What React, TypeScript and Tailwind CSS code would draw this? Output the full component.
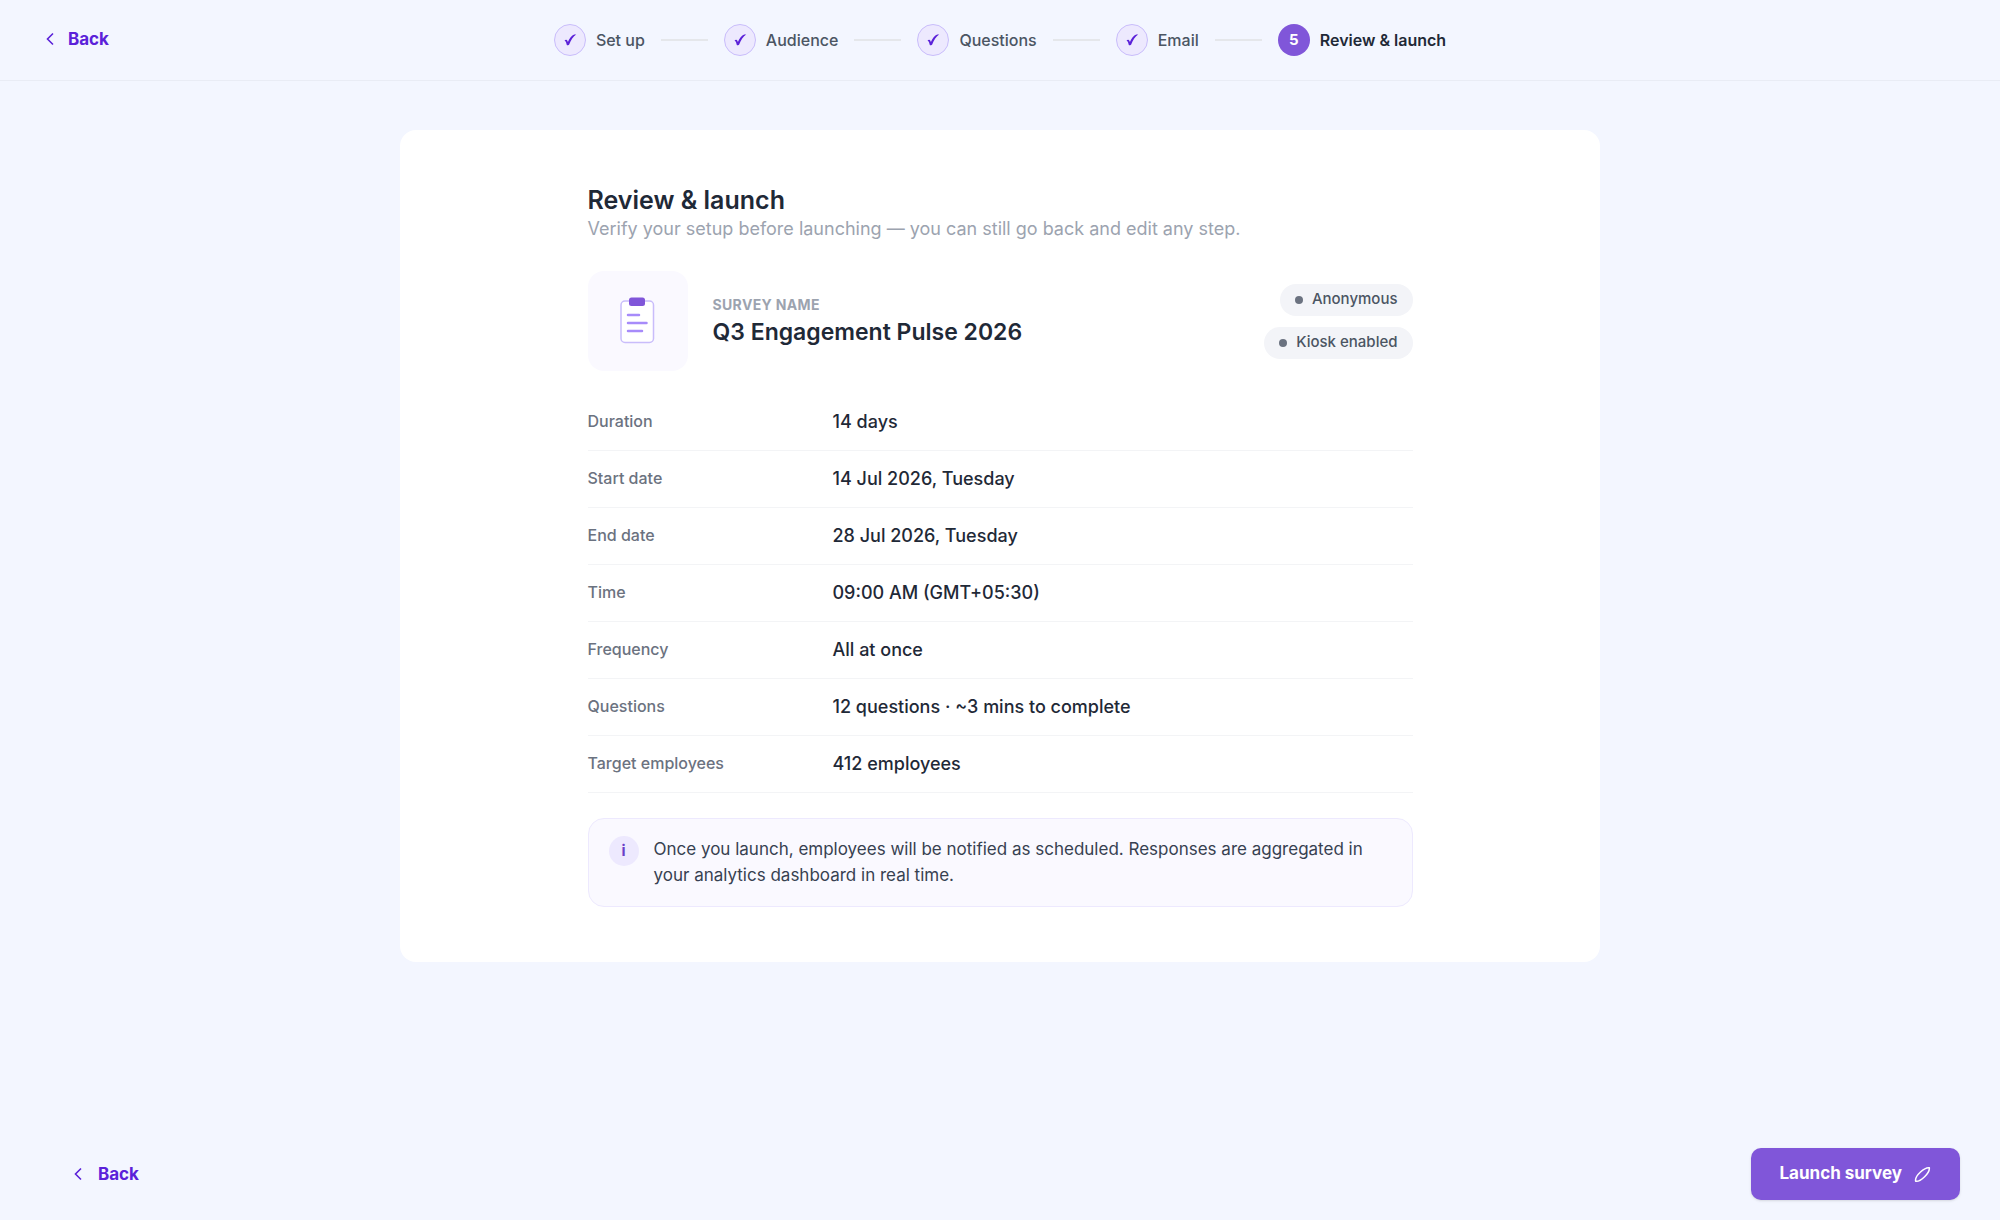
import { Fragment } from "react";
import clsx from "clsx";

const steps = ["Set up", "Audience", "Questions", "Email", "Review & launch"];
const currentStep = 4;

const details = [
  { label: "Duration", value: "14 days" },
  { label: "Start date", value: "14 Jul 2026, Tuesday" },
  { label: "End date", value: "28 Jul 2026, Tuesday" },
  { label: "Time", value: "09:00 AM (GMT+05:30)" },
  { label: "Frequency", value: "All at once" },
  { label: "Questions", value: "12 questions · ~3 mins to complete" },
  { label: "Target employees", value: "412 employees" },
];

const tags = ["Anonymous", "Kiosk enabled"];

const BackButton = ({ className }: { className: string }) => (
  <button
    type="button"
    className={clsx("flex items-center text-[17px] leading-6 font-bold text-[#5b21d9]", className)}
  >
    <svg width="12" height="16" viewBox="0 0 12 16" fill="none">
      <path d="M9 2.500 3.500 8 9 13.500" stroke="currentColor" strokeWidth="1.6" />
    </svg>
    Back
  </button>
);

const CheckIcon = () => (
  <svg width="14" height="14" viewBox="0 0 14 14" fill="currentColor">
    <path d="M1.500 7.600C2.600 6.500 4 6.600 4.500 8l.4 1C6.300 5.600 8.700 2.300 11.200 1.500c.7-.2 1.500-.1 2 .1C10.200 3.700 7.900 7 6.300 11.200c-.3.900-1.900 1.300-2.500.8C3.400 10.400 2.900 8.300 1.500 7.600z" />
  </svg>
);

const ClipboardIcon = () => (
  <svg width="36" height="48" viewBox="1 1 36 48" fill="none">
    <rect x="2" y="5" width="32.500" height="41.500" rx="4" fill="#fff" stroke="#c9bdfb" strokeWidth="1.500" />
    <rect x="10" y="1.500" width="16" height="8.500" rx="2.500" fill="#8056d9" />
    <path
      d="M9 19h11M9 27h18.500M9 35h14"
      stroke="#a78bfa"
      strokeWidth="2.500"
      strokeLinecap="round"
    />
  </svg>
);

const Stepper = () => (
  <ol className="flex items-center gap-4">
    {steps.map((step, i) => (
      <Fragment key={step}>
        {i > 0 && <li aria-hidden="true" className="h-0.5 w-[47px] bg-[#e5e7eb]" />}
        <li className="flex items-center gap-2.5">
          <span
            className={clsx(
              "flex size-8 items-center justify-center rounded-full",
              i === currentStep
                ? "bg-[#8056d9] text-[15px] font-bold text-white"
                : "border border-[#c9bdfb] bg-[#ede9fe] text-[#5b21d9]"
            )}
          >
            {i === currentStep ? i + 1 : <CheckIcon />}
          </span>
          <span
            className={clsx(
              "text-base",
              i === currentStep ? "font-semibold text-[#1f2937]" : "font-medium text-[#4b5563]"
            )}
          >
            {step}
          </span>
        </li>
      </Fragment>
    ))}
  </ol>
);

export default function App() {
  return (
    <div className="flex min-h-screen flex-col bg-[#f3f6ff] font-['Inter',sans-serif] text-[#1f2937]">
      {/* Header */}
      <header className="grid h-[81px] grid-cols-[1fr_auto_1fr] items-center border-b border-[#e9ecf5] px-11">
        <div className="flex pb-0.5">
          <BackButton className="gap-3" />
        </div>
        <Stepper />
      </header>

      {/* Review card */}
      <main className="mx-auto mt-[49px] w-full max-w-[1200px] rounded-2xl bg-white pt-[54px] pb-[55px]">
        <div className="mx-auto max-w-[825px]">
          <h1 className="text-[25px] leading-8 font-semibold">Review & launch</h1>
          <p className="text-lg leading-[26px] text-[#9ca3af]">
            Verify your setup before launching — you can still go back and edit any step.
          </p>

          {/* Survey summary */}
          <div className="mt-[29px] flex items-center gap-[25px]">
            <div className="flex size-[100px] items-center justify-center rounded-2xl bg-[#faf9ff]">
              <ClipboardIcon />
            </div>
            <div className="flex-1 pb-0.5">
              <p className="text-sm leading-6 font-bold tracking-wide text-[#9ca3af] uppercase">
                Survey name
              </p>
              <h2 className="text-[23px] leading-[30px] font-semibold">Q3 Engagement Pulse 2026</h2>
            </div>
            <ul className="flex flex-col items-end gap-[11px]">
              {tags.map((tag) => (
                <li
                  key={tag}
                  className="flex h-8 items-center gap-[9px] rounded-full bg-[#f3f4f8] px-[15px] text-[15px] font-medium text-[#4b5563]"
                >
                  <span className="size-2 rounded-full bg-[#6b7280]" />
                  {tag}
                </li>
              ))}
            </ul>
          </div>

          {/* Details */}
          <dl className="mt-[23px]">
            {details.map(({ label, value }) => (
              <div key={label} className="flex h-[57px] items-start border-b border-[#f3f4f6] pt-4">
                <dt className="w-[245px] text-base leading-[22px] font-medium text-[#6b7280]">
                  {label}
                </dt>
                <dd className="text-lg leading-6 font-medium">{value}</dd>
              </div>
            ))}
          </dl>

          <div className="mt-[25px] flex gap-[15px] rounded-2xl border border-[#ede9fe] bg-[#faf9ff] px-5 pt-[17px] pb-[18px]">
            <span className="flex size-[30px] shrink-0 items-center justify-center rounded-full bg-[#ede9fe] text-[15px] font-bold text-[#6b3fc9]">
              i
            </span>
            <p className="text-[17px] leading-[26px] text-[#374151]">
              Once you launch, employees will be notified as scheduled. Responses are aggregated in
              your analytics dashboard in real time.
            </p>
          </div>
        </div>
      </main>

      {/* Footer */}
      <footer className="mt-auto flex items-center justify-between pt-5 pr-10 pb-5 pl-[72px]">
        <BackButton className="gap-3.5" />
        <button
          type="button"
          className="flex h-[52px] items-center gap-3 rounded-[10px] bg-[#8056d9] px-[29px] text-[17px] font-bold text-white shadow-sm"
        >
          Launch survey
          <svg width="17" height="17" viewBox="0 0 17 17" fill="none">
            <path
              d="M1.700 15.300C1 13 3.300 9 6.500 6 9.500 3.200 13 1.300 15.300 1.700 15.600 4 13.700 7.700 10.600 10.700 7.600 13.600 4 15.700 1.700 15.300z"
              stroke="currentColor"
              strokeWidth="1.500"
              strokeLinejoin="round"
            />
          </svg>
        </button>
      </footer>
    </div>
  );
}
